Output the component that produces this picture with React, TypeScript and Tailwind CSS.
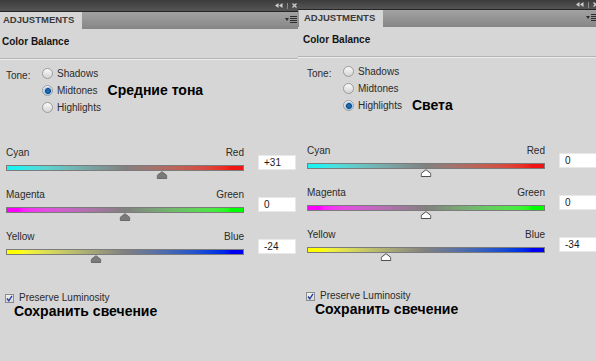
import React from "react";

type Slider = {
  left: string;
  right: string;
  value: number;
  gradient: string;
};

type PanelProps = {
  offset: string;
  barH: string;
  tone: number;
  note: string;
  dark: boolean;
  sliders: Slider[];
};

const sans = "font-['Liberation_Sans',Arial,sans-serif]";

const Radio = ({ on }: { on: boolean }) => (
  <span className="w-[11px] h-[11px] rounded-full border border-[#9c9c9c] bg-gradient-to-b from-[#fafafa] to-[#d4d4d4] flex items-center justify-center shrink-0">
    {on && (
      <span className="w-[6px] h-[6px] rounded-full bg-[#1e6db5] border border-[#0d3f6e] shadow-[0_0_0_1px_#9cc6ee]" />
    )}
  </span>
);

const Thumb = ({ dark }: { dark: boolean }) => (
  <svg width="11" height="8" viewBox="0 0 11 8">
    <path
      d="M5.5 0.7 L10.3 4.4 L10.3 7.5 L0.7 7.5 L0.7 4.4 Z"
      fill={dark ? "#7a7a7a" : "#ffffff"}
      stroke={dark ? "#6a6a6a" : "#4d4d4d"}
      strokeWidth="1"
      strokeLinejoin="round"
    />
  </svg>
);

const MenuIcon = () => (
  <svg width="12" height="8" viewBox="0 0 12 8">
    <path d="M0 2 L4 2 L2 5 Z" fill="#2e2e2e" />
    <rect x="5" y="0" width="7" height="1" fill="#2e2e2e" />
    <rect x="5" y="2" width="7" height="1" fill="#2e2e2e" />
    <rect x="5" y="4" width="7" height="1" fill="#2e2e2e" />
    <rect x="5" y="6" width="7" height="1" fill="#2e2e2e" />
  </svg>
);

const Panel = ({ offset, barH, tone, note, dark, sliders }: PanelProps) => {
  const tones = ["Shadows", "Midtones", "Highlights"];
  return (
    <div className="w-[298px] h-[361px] overflow-hidden bg-[#d6d6d6]">
      <div className={`w-[302px] ${offset} ${sans} text-[#1c1c1c]`}>
        {/* title bar */}
        <div
          className={`${barH} bg-gradient-to-b from-[#3c3c3c] to-[#555555] border-b border-[#262626] flex items-center justify-end pr-[2px] gap-[3px]`}
        >
          <svg width="8" height="5" viewBox="0 0 8 5">
            <path d="M0 2.5 L3.5 0 L3.5 5 Z M4 2.5 L7.5 0 L7.5 5 Z" fill="#cfcfcf" />
          </svg>
          <span className="w-px h-[6px] bg-[#8a8a8a] mx-[1px]" />
          <svg width="5" height="5" viewBox="0 0 5 5">
            <path d="M0.5 0.5 L4.5 4.5 M4.5 0.5 L0.5 4.5" stroke="#cfcfcf" strokeWidth="1.3" />
          </svg>
        </div>
        {/* tab row */}
        <div className="h-[17px] bg-gradient-to-b from-[#a2a2a2] to-[#868686] flex items-end">
          <div className="ml-[1px] w-[84px] h-[17px] bg-[#d6d6d6] flex items-center pl-[5px] font-bold text-[9.5px] text-[#3a3a3a]">
            ADJUSTMENTS
          </div>
          <div className="ml-auto mr-[2px] mb-[5px]">
            <MenuIcon />
          </div>
        </div>
        {/* header */}
        <div className="pt-[7px] pl-[5px] h-[29px] font-bold text-[10px] leading-[12px] text-[#141414]">
          Color Balance
        </div>
        <div className="h-px bg-[#b4b4b4]" />
        <div className="h-px bg-[#ececec]" />
        {/* tone */}
        <div className="flex pt-[5px] pl-[9px] text-[10px]">
          <div className="w-[36px] pt-[3px] text-[#2a2a2a]">Tone:</div>
          <div className="flex flex-col">
            {tones.map((t, i) => (
              <div key={t} className="h-[17px] flex items-center gap-[4px]">
                <Radio on={i === tone} />
                <span className="text-[#2a2a2a]">{t}</span>
                {i === tone && (
                  <span className="ml-[6px] font-bold text-[14px] text-black">{note}</span>
                )}
              </div>
            ))}
          </div>
        </div>
        {/* sliders */}
        <div className="flex flex-col gap-[10px] pt-[31px] pl-[9px]">
          {sliders.map((s) => (
            <div key={s.left} className="flex">
              <div className="w-[238px]">
                <div className="flex justify-between h-[12px] leading-[12px] text-[10px] text-[#2a2a2a]">
                  <span>{s.left}</span>
                  <span>{s.right}</span>
                </div>
                <div className={`mt-[6px] h-[6px] border border-[#7c7c7c] ${s.gradient}`} />
                <div className="relative h-[8px]">
                  <div
                    className="absolute top-[0px] -translate-x-1/2"
                    style={{ left: `${((s.value + 100) / 200) * 100}%` }}
                  >
                    <Thumb dark={dark} />
                  </div>
                </div>
              </div>
              <div className="pl-[14px] pt-[8px]">
                <div className="w-[38px] h-[15px] bg-white border border-[#e8e8e8] text-[10px] leading-[13px] pl-[5px] text-[#1a1a1a]">
                  {s.value > 0 ? `+${s.value}` : `${s.value}`}
                </div>
              </div>
            </div>
          ))}
        </div>
        {/* preserve */}
        <div className="pt-[29px] pl-[8px] flex items-center gap-[5px] text-[10px] leading-[12px]">
          <span className="w-[9px] h-[9px] border border-[#8c8c8c] bg-gradient-to-b from-[#f0f0f0] to-[#d9d9d9] flex items-center justify-center">
            <svg width="7" height="7" viewBox="0 0 7 7">
              <path d="M1 3.5 L2.8 5.8 L6 0.8" stroke="#2b3fa8" strokeWidth="1.4" fill="none" />
            </svg>
          </span>
          <span className="text-[#2a2a2a]">Preserve Luminosity</span>
        </div>
        <div className="pl-[17px] font-bold text-[14px] leading-[15px] text-black">
          Сохранить свечение
        </div>
      </div>
    </div>
  );
};

const CR = "bg-gradient-to-r from-[#1ff0f0] from-5% via-[#808080] via-50% to-[#f01414] to-95%";
const MG = "bg-gradient-to-r from-[#ff00ff] from-5% via-[#808080] via-50% to-[#00ff00] to-95%";
const YB = "bg-gradient-to-r from-[#ffff00] from-5% via-[#808080] via-50% to-[#0000f0] to-95%";

export default function App() {
  return (
    <div className="w-[596px] h-[361px] flex bg-[#d6d6d6] overflow-hidden">
      <Panel
        offset="-ml-[3px]"
        barH="h-[12px]"
        tone={1}
        note="Средние тона"
        dark={true}
        sliders={[
          { left: "Cyan", right: "Red", value: 31, gradient: CR },
          { left: "Magenta", right: "Green", value: 0, gradient: MG },
          { left: "Yellow", right: "Blue", value: -24, gradient: YB },
        ]}
      />
      <Panel
        offset="ml-0"
        barH="h-[10px]"
        tone={2}
        note="Света"
        dark={false}
        sliders={[
          { left: "Cyan", right: "Red", value: 0, gradient: CR },
          { left: "Magenta", right: "Green", value: 0, gradient: MG },
          { left: "Yellow", right: "Blue", value: -34, gradient: YB },
        ]}
      />
    </div>
  );
}
